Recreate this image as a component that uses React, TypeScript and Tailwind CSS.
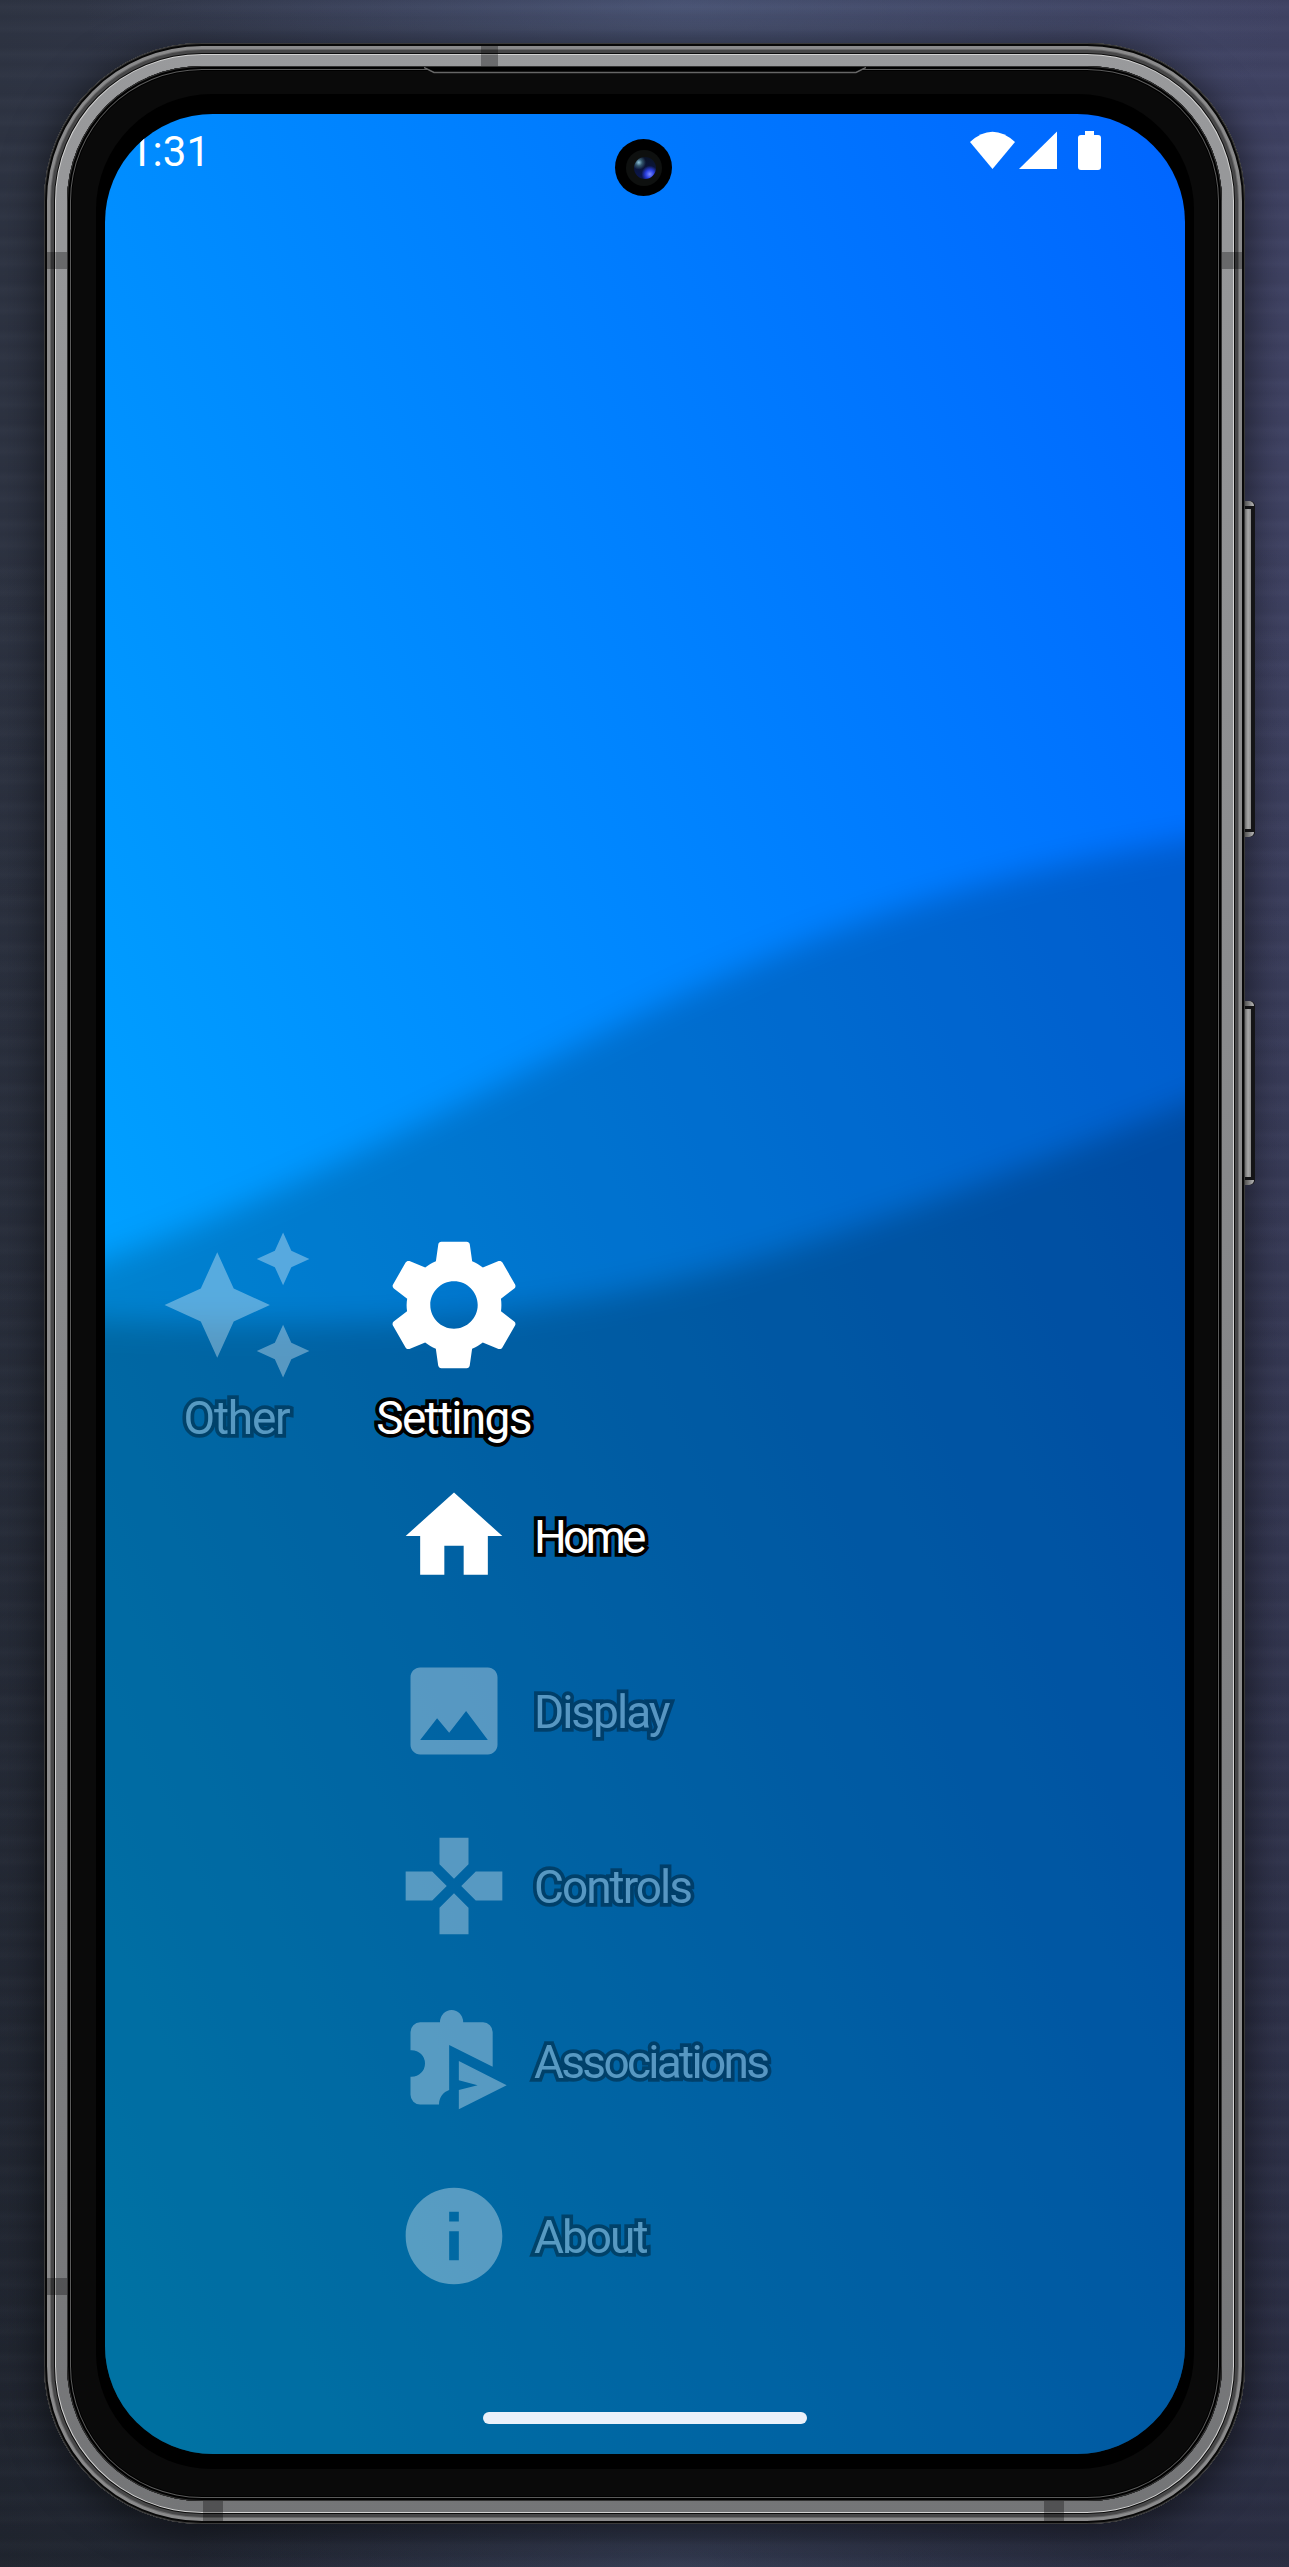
const iconPaths = {
  sparkles:
    'M19 9l1.25-2.75L23 5l-2.75-1.25L19 1l-1.25 2.75L15 5l2.75 1.25L19 9zm-7.5.5L9 4 6.5 9.5 1 12l5.5 2.5L9 20l2.5-5.5L17 12l-5.5-2.5zM19 15l-1.25 2.75L15 19l2.75 1.25L19 23l1.25-2.75L23 19l-2.75-1.25L19 15z',
  gear: 'M19.14 12.94c.04-.3.06-.61.06-.94 0-.32-.02-.64-.07-.94l2.03-1.58c.18-.14.23-.41.12-.61l-1.92-3.32c-.12-.22-.37-.29-.59-.22l-2.39.96c-.5-.38-1.03-.7-1.62-.94l-.36-2.54c-.04-.24-.24-.41-.48-.41h-3.84c-.24 0-.43.17-.47.41l-.36 2.54c-.59.24-1.13.57-1.62.94l-2.39-.96c-.22-.08-.47 0-.59.22L2.74 8.87c-.12.21-.08.47.12.61l2.03 1.58c-.05.3-.09.63-.09.94s.02.64.07.94l-2.03 1.58c-.18.14-.23.41-.12.61l1.92 3.32c.12.22.37.29.59.22l2.39-.96c.5.38 1.03.7 1.62.94l.36 2.54c.05.24.24.41.48.41h3.84c.24 0 .44-.17.47-.41l.36-2.54c.59-.24 1.13-.56 1.62-.94l2.39.96c.22.08.47 0 .59-.22l1.92-3.32c.12-.22.07-.47-.12-.61l-2.01-1.58zM12 15.6c-1.98 0-3.6-1.62-3.6-3.6s1.62-3.6 3.6-3.6 3.6 1.62 3.6 3.6-1.62 3.6-3.6 3.6z',
  home: 'M10 20v-6h4v6h5v-8h3L12 3 2 12h3v8z',
  image:
    'M21 19V5c0-1.1-.9-2-2-2H5c-1.1 0-2 .9-2 2v14c0 1.1.9 2 2 2h14c1.1 0 2-.9 2-2zM8.5 13.5l2.5 3.01L14.5 12l4.5 6H5l3.5-4.5z',
  gamepad:
    'M15 7.5V2H9v5.5l3 3 3-3zM7.5 9H2v6h5.5l3-3-3-3zM9 16.5V22h6v-5.5l-3-3-3 3zM16.5 9l-3 3 3 3H22V9h-5.5z',
  puzzle:
    'M20 13.2V6a2 2 0 0 0-2-2h-4.1a2.4 2.55 0 0 0-4.8 0H5a2 2 0 0 0-2 2v3.75h.25a2.75 2.75 0 0 1 0 5.5H3V19a2 2 0 0 0 2 2h3.9c0-1.5.9-2.6 2.1-3V8.7zM13 12l9.9 5L13 22v-4l3.9-1L13 16z',
  info: 'M12 2C6.48 2 2 6.48 2 12s4.48 10 10 10 10-4.48 10-10S17.52 2 12 2zm1 15h-2v-6h2v6zm0-8h-2V7h2v2z',
};

type IconName = keyof typeof iconPaths;

function Icon({ name, className }: { name: IconName; className: string }) {
  return (
    <svg viewBox="0 0 24 24" fill="white" className={className}>
      <path d={iconPaths[name]} />
    </svg>
  );
}

const labelClass =
  "whitespace-nowrap font-['Roboto',sans-serif] text-[46px] leading-[60px] text-white [-webkit-text-stroke:7.5px_black] [paint-order:stroke_fill]";

const categories: { name: string; icon: IconName; active: boolean; tracking: string }[] = [
  { name: 'Other', icon: 'sparkles', active: false, tracking: 'tracking-[-1.2px]' },
  { name: 'Settings', icon: 'gear', active: true, tracking: 'tracking-[-1.7px]' },
];

const items: { name: string; icon: IconName; active: boolean; tracking: string }[] = [
  { name: 'Home', icon: 'home', active: true, tracking: 'tracking-[-3.8px]' },
  { name: 'Display', icon: 'image', active: false, tracking: 'tracking-[-2px]' },
  { name: 'Controls', icon: 'gamepad', active: false, tracking: 'tracking-[-2px]' },
  { name: 'Associations', icon: 'puzzle', active: false, tracking: 'tracking-[-2.7px]' },
  { name: 'About', icon: 'info', active: false, tracking: 'tracking-[-2px]' },
];

function Wallpaper() {
  return (
    <svg viewBox="0 0 1080 2340" className="absolute inset-0 h-full w-full">
      <defs>
        <filter id="soft" x="-10%" y="-10%" width="120%" height="120%">
          <feGaussianBlur stdDeviation="15" />
        </filter>
      </defs>
      <path
        d="M-80 1172C100 1120 300 1018 480 928C680 828 860 756 1160 714V2500H-80Z"
        fill="black"
        fillOpacity="0.19"
        filter="url(#soft)"
      />
      <path
        d="M-80 1203C300 1224 460 1198 640 1148C800 1100 960 1038 1160 958V2500H-80Z"
        fill="black"
        fillOpacity="0.21"
        filter="url(#soft)"
      />
    </svg>
  );
}

function StatusBar() {
  return (
    <header className="relative flex h-[76px] items-center justify-between pr-[84px] pl-[24px]">
      <span className="font-['Roboto',sans-serif] text-[42px] leading-[76px] text-white">1:31</span>
      <svg viewBox="0 0 131 40" fill="white" className="mb-[2px] h-10 w-[131px]">
        <path d="M0 11Q22.500 -9.500 45 11L22.500 38Z" />
        <path d="M49 38L87 0.500V38Z" />
        <path d="M115 0h9v4h4a3 3 0 0 1 3 3v29a3 3 0 0 1-3 3h-17a3 3 0 0 1-3-3V7a3 3 0 0 1 3-3h4Z" />
      </svg>
    </header>
  );
}

function Camera() {
  return (
    <div className="absolute top-[25px] left-[510px] flex h-[57px] w-[57px] items-center justify-center rounded-full bg-black">
      <div className="flex h-9 w-9 items-center justify-center rounded-full bg-[#0e100f]">
        <div className="mt-[1px] ml-[3px] h-[22px] w-[22px] rounded-full bg-[radial-gradient(circle_at_22%_25%,#8fc3d8_0%,#34566d_14%,transparent_30%),radial-gradient(circle_at_72%_78%,#7d8cff_0%,#2a3fe0_18%,transparent_36%),linear-gradient(#0a1326,#0b1650)]" />
      </div>
    </div>
  );
}

function Screen() {
  return (
    <main className="relative flex h-[2340px] w-[1080px] flex-col overflow-hidden rounded-[108px] bg-[linear-gradient(to_bottom_left,#0065ff,#00b4ff)]">
      <Wallpaper />
      <StatusBar />
      <Camera />
      <nav className="relative mt-[1036px] ml-[23px] flex">
        {categories.map((c) => (
          <div
            key={c.name}
            className={`flex w-[217px] flex-col items-center ${c.active ? '' : 'opacity-[0.34]'}`}
          >
            <Icon name={c.icon} className="h-[158px] w-[158px]" />
            <span className={`mt-[4px] mb-[1px] ${labelClass} ${c.tracking}`}>{c.name}</span>
          </div>
        ))}
      </nav>
      <ul className="relative mt-[-1px] ml-[291px] flex flex-col">
        {items.map((item) => (
          <li
            key={item.name}
            className={`flex h-[175px] items-center gap-[22px] ${item.active ? '' : 'opacity-[0.34]'}`}
          >
            <Icon name={item.icon} className="h-[116px] w-[116px]" />
            <span className={`mt-[3px] ${labelClass} ${item.tracking}`}>{item.name}</span>
          </li>
        ))}
      </ul>
      <div className="relative mt-auto mb-[30px] h-3 w-[324px] self-center rounded-full bg-[#eaf1fa]" />
    </main>
  );
}

function SideButton({ className }: { className: string }) {
  return (
    <div className={`absolute left-[1243px] flex w-[12px] flex-col rounded-r-[5px] bg-[#1b1b1e] ${className}`}>
      <div className="h-[5px] w-[11px] rounded-tr-[5px] bg-linear-to-r from-[#666] to-[#eee]" />
      <div className="my-[3px] ml-[2px] w-[6px] grow bg-linear-to-r from-[#9f9f9f] via-[#eaeaea] to-[#b8b8b8]" />
      <div className="h-[5px] w-[11px] rounded-br-[5px] bg-linear-to-r from-[#666] to-[#eee]" />
    </div>
  );
}

export default function App() {
  return (
    <div className="relative h-[2567px] w-[1289px] overflow-hidden bg-[repeating-linear-gradient(180deg,rgba(0,0,0,0.04)_0px,rgba(255,255,255,0.01)_7px,rgba(0,0,0,0.03)_17px,rgba(255,255,255,0.012)_29px,rgba(0,0,0,0.02)_34px,rgba(0,0,0,0.04)_47px),radial-gradient(ellipse_600px_260px_at_53%_0%,rgba(90,105,145,0.55),transparent),radial-gradient(ellipse_500px_200px_at_53%_100%,rgba(90,105,145,0.3),transparent),linear-gradient(180deg,transparent_20%,rgba(12,16,20,0.42))_,linear-gradient(90deg,#2e3443,#404364)] pt-[43px] pl-[44px]">
      <SideButton className="top-[501px] h-[336px]" />
      <SideButton className="top-[1001px] h-[184px]" />
      <div className="relative h-[2481px] w-[1201px] rounded-[158px] bg-linear-to-b from-[#999a9c] to-[#747577] pt-[71px] pl-[61px] shadow-[0_6px_36px_6px_rgba(0,0,0,0.5),inset_0_0_0_1px_#3a3a3a,inset_0_0_0_3px_#080808,inset_0_0_0_6px_#8a8a8b,inset_0_0_0_7px_#6a6a6b,inset_0_0_0_10px_#474748,inset_0_0_0_11px_#0c0c0c,inset_0_0_0_12px_#d2d2d2]">
        <div className="absolute top-[3px] left-[437px] h-[20px] w-[17px] bg-black/30" />
        <div className="absolute top-[209px] left-[3px] h-[17px] w-[20px] bg-black/30" />
        <div className="absolute top-[209px] right-[3px] h-[17px] w-[20px] bg-black/30" />
        <div className="absolute top-[2235px] left-[3px] h-[17px] w-[20px] bg-black/30" />
        <div className="absolute bottom-[3px] left-[159px] h-[20px] w-[20px] bg-black/30" />
        <div className="absolute right-[181px] bottom-[3px] h-[20px] w-[20px] bg-black/30" />
        <div className="absolute inset-[23px] rounded-[135px] bg-[#0a0a0a] shadow-[inset_0_0_0_1px_#333,inset_0_0_0_3px_#000,inset_0_0_0_4px_#5b5b5b,inset_0_0_0_5px_#000]" />
        <div className="absolute top-[51px] right-[51px] bottom-[55px] left-[52px] rounded-[116px] bg-black" />
        <svg viewBox="0 0 442 8" className="absolute top-[24px] left-[380px] h-2 w-[442px]">
          <path d="M0 0L10 5.500H432L442 0Z" fill="black" />
          <path d="M0 0.500L10 5.500H432L442 0.500" fill="none" stroke="#666" strokeWidth="1.500" />
        </svg>
        <Screen />
      </div>
    </div>
  );
}
